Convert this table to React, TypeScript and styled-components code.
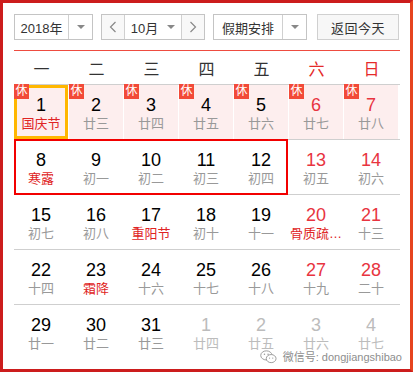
import styled, { createGlobalStyle } from "styled-components"

const Global = createGlobalStyle`
  html, body { margin: 0; padding: 0; background: #fff; }
  body { font-family: "Liberation Sans", "Noto Sans CJK SC", sans-serif; }
`

type Day = { n: number; lunar: string; fest?: boolean; off?: boolean; other?: boolean; today?: boolean }

const weeks: Day[][] = [
  [
    { n: 1, lunar: '国庆节', fest: true, off: true, today: true },
    { n: 2, lunar: '廿三', off: true },
    { n: 3, lunar: '廿四', off: true },
    { n: 4, lunar: '廿五', off: true },
    { n: 5, lunar: '廿六', off: true },
    { n: 6, lunar: '廿七', off: true },
    { n: 7, lunar: '廿八', off: true },
  ],
  [
    { n: 8, lunar: '寒露', fest: true },
    { n: 9, lunar: '初一' },
    { n: 10, lunar: '初二' },
    { n: 11, lunar: '初三' },
    { n: 12, lunar: '初四' },
    { n: 13, lunar: '初五' },
    { n: 14, lunar: '初六' },
  ],
  [
    { n: 15, lunar: '初七' },
    { n: 16, lunar: '初八' },
    { n: 17, lunar: '重阳节', fest: true },
    { n: 18, lunar: '初十' },
    { n: 19, lunar: '十一' },
    { n: 20, lunar: '骨质疏…', fest: true },
    { n: 21, lunar: '十三' },
  ],
  [
    { n: 22, lunar: '十四' },
    { n: 23, lunar: '霜降', fest: true },
    { n: 24, lunar: '十六' },
    { n: 25, lunar: '十七' },
    { n: 26, lunar: '十八' },
    { n: 27, lunar: '十九' },
    { n: 28, lunar: '二十' },
  ],
  [
    { n: 29, lunar: '廿一' },
    { n: 30, lunar: '廿二' },
    { n: 31, lunar: '廿三' },
    { n: 1, lunar: '廿四', other: true },
    { n: 2, lunar: '廿五', other: true },
    { n: 3, lunar: '廿六', other: true },
    { n: 4, lunar: '廿七', other: true },
  ],
]

const Frame = styled.div`
  position: relative;
  width: 413px;
  height: 372px;
  box-sizing: border-box;
  border: 3px solid #cc1d1d;
  border-right-color: #e6441f;
  padding: 11px 10px 0 11px;
`

const Toolbar = styled.div`
  display: flex;
  height: 26px;
  gap: 8px;
  padding-bottom: 10px;
  border-bottom: 1px solid #ee4c40;
`

const Select = styled.div<{ $w: number }>`
  display: flex;
  width: ${p => p.$w}px;
  box-sizing: border-box;
  border: 1px solid #c4c4c4;
  background: #fff;
  font-size: 13px;
  color: #333;
`

const SelText = styled.div`
  flex: 1;
  display: flex;
  align-items: center;
  justify-content: center;
  gap: 9px;
`

const Caret = styled.div`
  width: 23px;
  border-left: 1px solid #d0d0d0;
  display: flex;
  align-items: center;
  justify-content: center;
`

const Tri = styled.span`
  width: 0;
  height: 0;
  border-left: 4px solid transparent;
  border-right: 4px solid transparent;
  border-top: 4px solid #888;
`

const Step = styled.div<{ $side: 'l' | 'r' }>`
  width: 22px;
  display: flex;
  align-items: center;
  justify-content: center;
  background: #f8f8f8;
  ${p => (p.$side === 'l' ? 'border-right' : 'border-left')}: 1px solid #d0d0d0;
`

const Button = styled.div`
  margin-left: 2px;
  width: 82px;
  box-sizing: border-box;
  border: 1px solid #d0d0d0;
  background: #f7f7f7;
  display: flex;
  align-items: center;
  justify-content: center;
  font-size: 13px;
  color: #333;
  letter-spacing: 0.5px;
`

const Grid = styled.div`
  display: grid;
  grid-template-columns: repeat(7, 55px);
`

const Head = styled(Grid)`
  height: 33px;
  border-bottom: 1px solid #cfcfcf;
`

const HeadCell = styled.div<{ $red?: boolean }>`
  display: flex;
  align-items: center;
  justify-content: center;
  font-size: 16px;
  color: ${p => (p.$red ? '#e52a2a' : '#333')};
`

const Week = styled(Grid)<{ $last?: boolean }>`
  border-bottom: 1px solid ${p => (p.$last ? 'transparent' : '#cfcfcf')};
`

const Cell = styled.div<{ $off?: boolean; $today?: boolean; $col: number }>`
  grid-row: 1;
  grid-column: ${p => p.$col};
  position: relative;
  height: 54px;
  box-sizing: border-box;
  padding-top: 10px;
  display: flex;
  flex-direction: column;
  align-items: center;
  background: ${p => (p.$off ? '#fdeeee' : 'transparent')};
  border-right: 1px solid #fff;
  box-shadow: ${p => (p.$today ? 'inset 0 0 0 3px #ffb700' : 'none')};
`

const Num = styled.div<{ $tone: string }>`
  font-size: 18px;
  line-height: 20px;
  color: ${p => p.$tone};
`

const Lunar = styled.div<{ $tone: string }>`
  margin-top: 1px;
  font-size: 13px;
  line-height: 16px;
  color: ${p => p.$tone};
  white-space: nowrap;
`

const Badge = styled.span`
  position: absolute;
  left: 0;
  top: -1px;
  width: 15px;
  height: 15px;
  background: #f24a38;
  color: #fff;
  font-size: 12px;
  line-height: 15px;
  text-align: center;
`

const Highlight = styled.div`
  grid-row: 1;
  grid-column: 1 / 6;
  margin: -1px 1px -1px 0;
  border: 2px solid #f20000;
  pointer-events: none;
  z-index: 1;
`

const Mark = styled.div`
  position: absolute;
  right: 8px;
  bottom: 5px;
  display: flex;
  align-items: center;
  gap: 6px;
  font-size: 11px;
  line-height: 13px;
  color: #8e8e8e;
  text-shadow: 0 0 2px #fff, 0 0 2px #fff, 0 0 1px #fff;
`

const Chevron = ({ dir }: { dir: 'l' | 'r' }) => (
  <svg width="8" height="12" viewBox="0 0 8 12">
    <polyline
      points={dir === 'l' ? '6.5,1 1.5,6 6.5,11' : '1.5,1 6.5,6 1.5,11'}
      fill="none"
      stroke="#888"
      strokeWidth="1.2"
    />
  </svg>
)

const WeChat = () => (
  <svg width="17" height="14" viewBox="0 0 16 13">
    <ellipse cx="6" cy="5" rx="5.3" ry="4.3" fill="#fff" stroke="#999" strokeWidth="0.9" />
    <ellipse cx="10.5" cy="8" rx="4.6" ry="3.8" fill="#fff" stroke="#999" strokeWidth="0.9" />
    <circle cx="4.2" cy="4" r="0.7" fill="#999" />
    <circle cx="7.6" cy="4" r="0.7" fill="#999" />
    <circle cx="9" cy="7.5" r="0.6" fill="#999" />
    <circle cx="12" cy="7.5" r="0.6" fill="#999" />
  </svg>
)

const App = () => {
  const heads = ['一', '二', '三', '四', '五', '六', '日']
  return (
    <>
      <Global />
      <Frame>
        <Toolbar>
          <Select $w={79}>
            <SelText>2018年</SelText>
            <Caret><Tri /></Caret>
          </Select>
          <Select $w={104}>
            <Step $side="l"><Chevron dir="l" /></Step>
            <SelText>10月<Tri /></SelText>
            <Step $side="r"><Chevron dir="r" /></Step>
          </Select>
          <Select $w={94}>
            <SelText>假期安排</SelText>
            <Caret><Tri /></Caret>
          </Select>
          <Button>返回今天</Button>
        </Toolbar>
        <Head>
          {heads.map((h, i) => (
            <HeadCell key={h} $red={i > 4}>{h}</HeadCell>
          ))}
        </Head>
        {weeks.map((week, wi) => (
          <Week key={wi} $last={wi === weeks.length - 1}>
            {week.map((d, i) => {
              const weekend = i > 4
              const numTone = d.other ? '#bcbcbc' : weekend ? '#e8343f' : '#000'
              const lunarTone = d.fest ? '#e02424' : d.other ? '#bcbcbc' : '#999'
              return (
                <Cell key={i} $col={i + 1} $off={d.off} $today={d.today}>
                  {d.off && <Badge>休</Badge>}
                  <Num $tone={numTone}>{d.n}</Num>
                  <Lunar $tone={lunarTone}>{d.lunar}</Lunar>
                </Cell>
              )
            })}
            {wi === 1 && <Highlight />}
          </Week>
        ))}
        <Mark>
          <WeChat />
          <span>微信号: dongjiangshibao</span>
        </Mark>
      </Frame>
    </>
  )
}

export default App
